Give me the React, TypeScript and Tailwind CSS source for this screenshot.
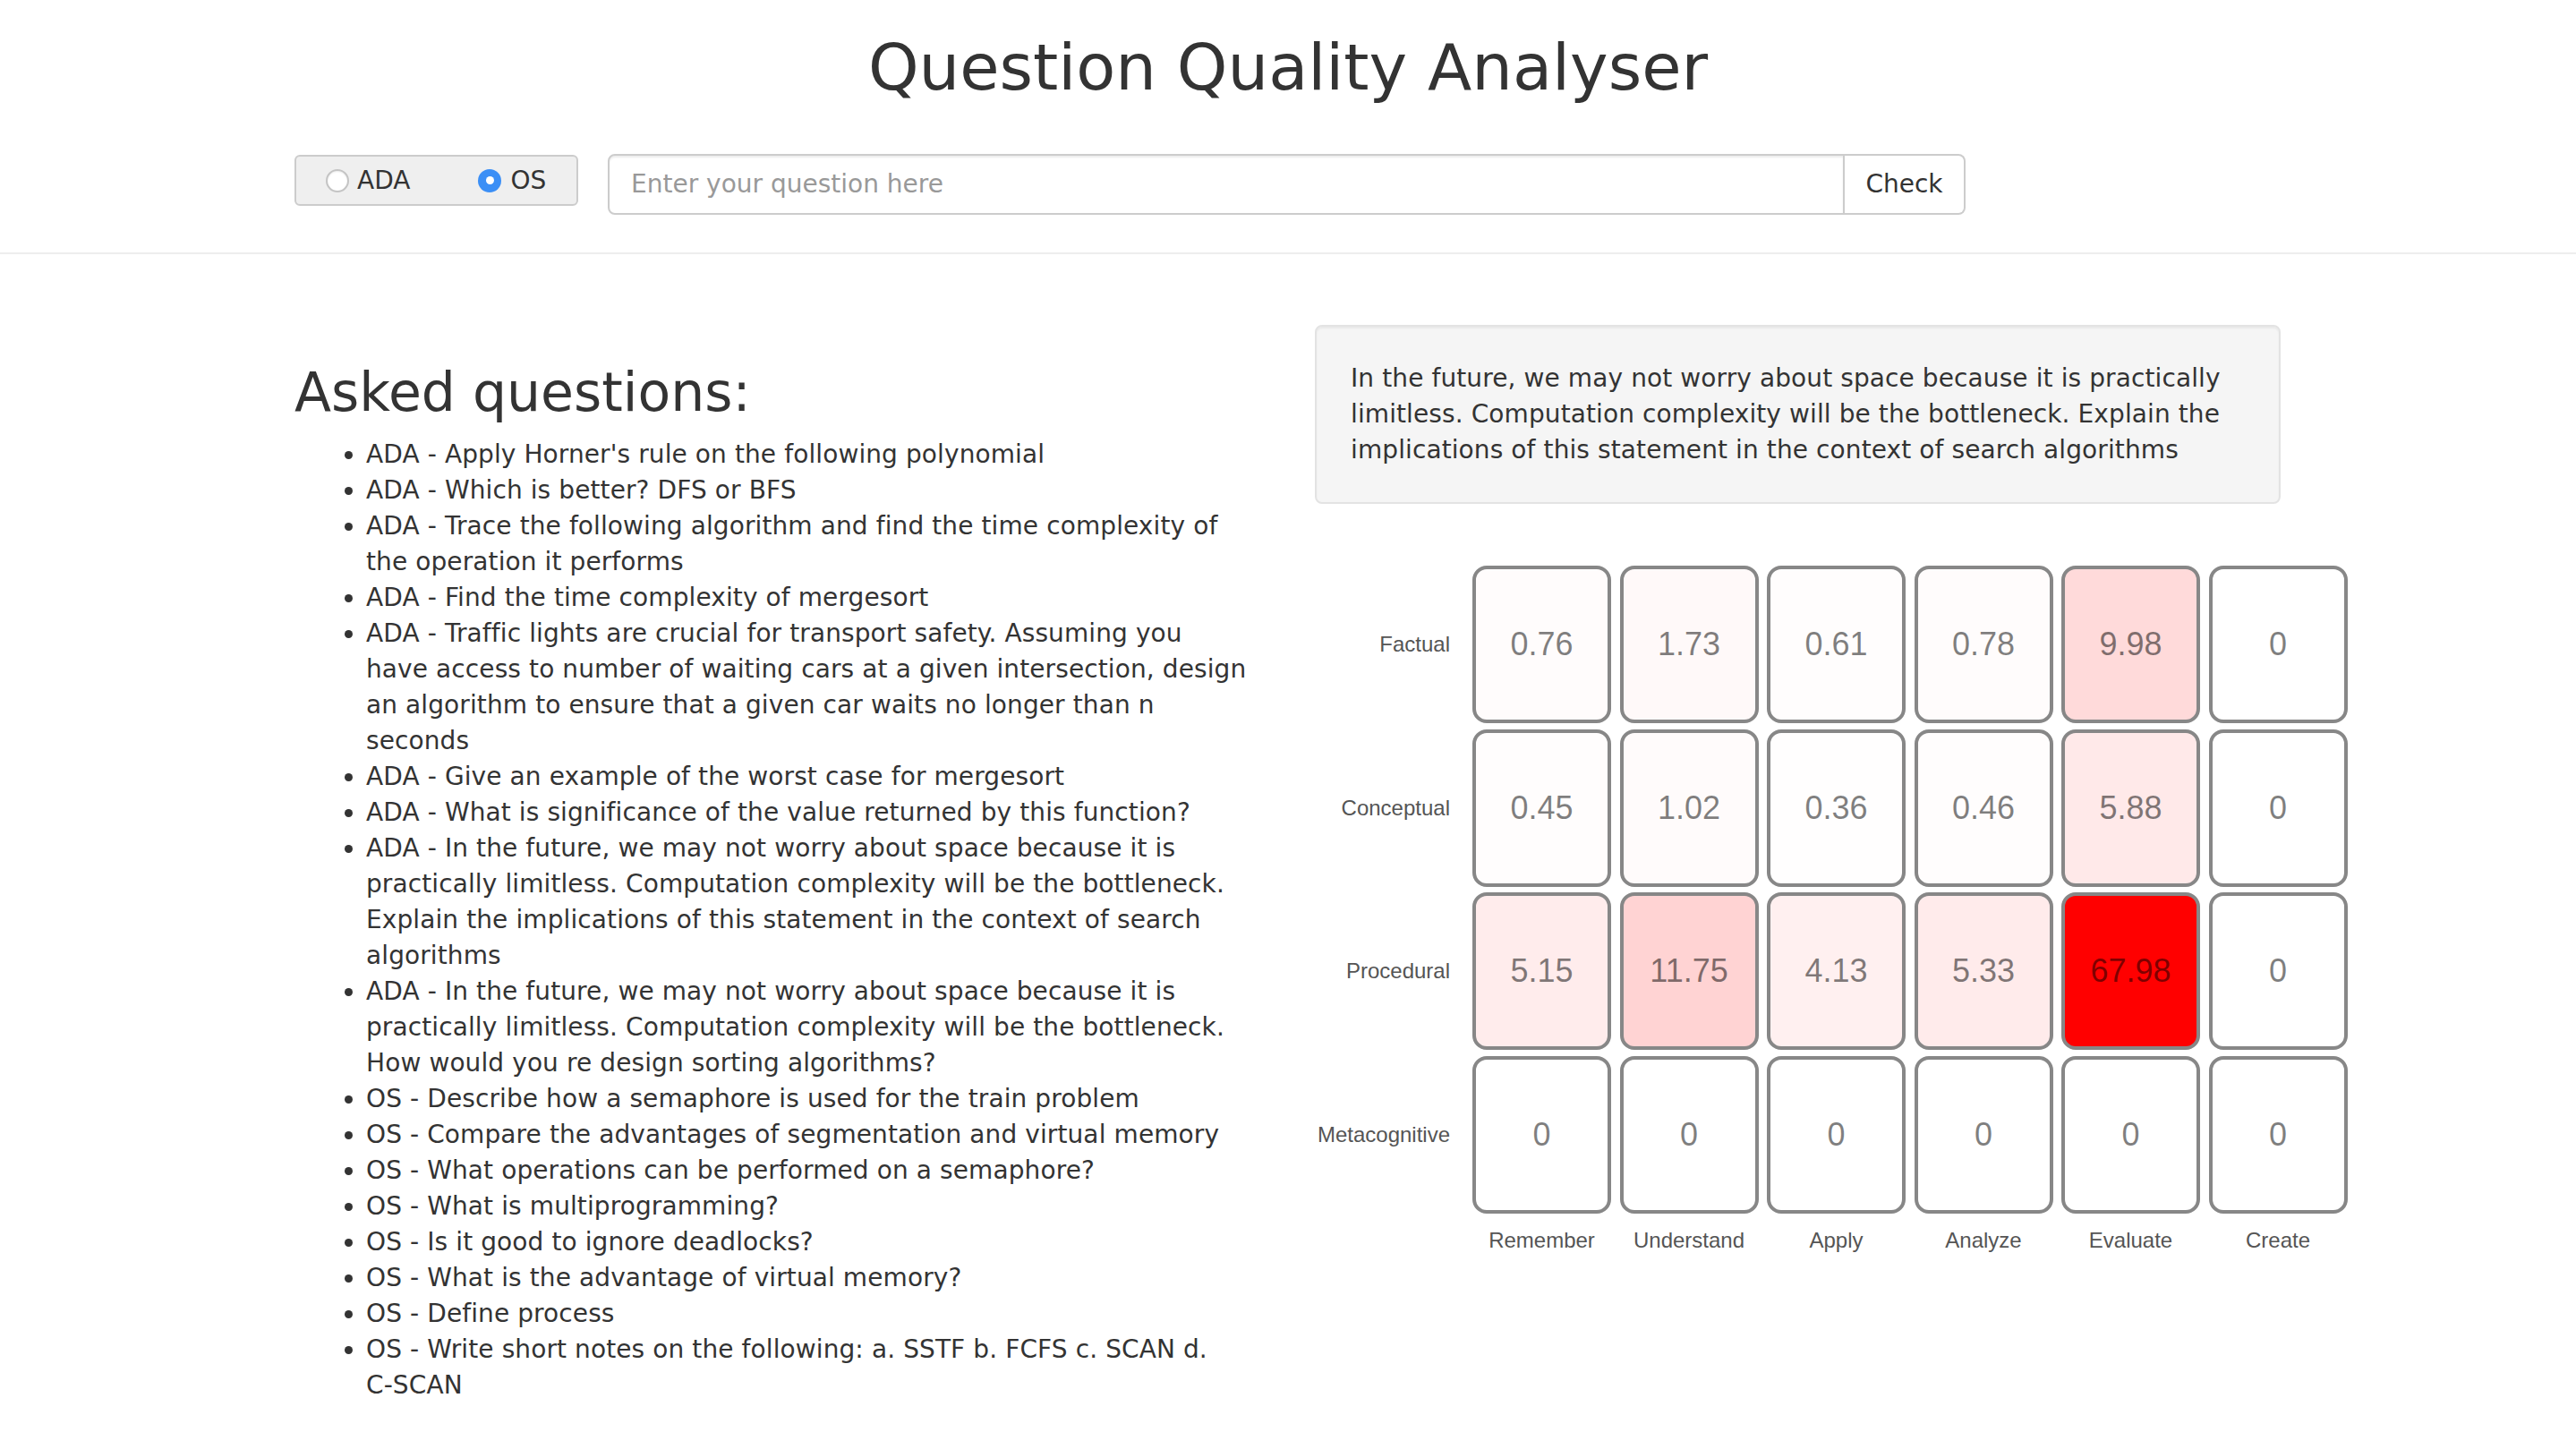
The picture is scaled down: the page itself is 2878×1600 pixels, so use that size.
import React from "react";

const questions: React.ReactNode[] = [
  "ADA - Apply Horner's rule on the following polynomial",
  "ADA - Which is better? DFS or BFS",
  "ADA - Trace the following algorithm and find the time complexity of the operation it performs",
  "ADA - Find the time complexity of mergesort",
  <>
    ADA - Traffic lights are crucial for transport safety. Assuming you
    <br />
    have access to number of waiting cars at a given intersection, design an algorithm to ensure that a given car
    waits no longer than n seconds
  </>,
  "ADA - Give an example of the worst case for mergesort",
  "ADA - What is significance of the value returned by this function?",
  "ADA - In the future, we may not worry about space because it is practically limitless. Computation complexity will be the bottleneck. Explain the implications of this statement in the context of search algorithms",
  "ADA - In the future, we may not worry about space because it is practically limitless. Computation complexity will be the bottleneck. How would you re design sorting algorithms?",
  "OS - Describe how a semaphore is used for the train problem",
  "OS - Compare the advantages of segmentation and virtual memory",
  "OS - What operations can be performed on a semaphore?",
  "OS - What is multiprogramming?",
  "OS - Is it good to ignore deadlocks?",
  "OS - What is the advantage of virtual memory?",
  "OS - Define process",
  <>
    OS - Write short notes on the following: a. SSTF b. FCFS c. SCAN d.{" "}
    <span className="whitespace-nowrap">C-SCAN</span>
  </>,
];

const rows = ["Factual", "Conceptual", "Procedural", "Metacognitive"];
const cols = ["Remember", "Understand", "Apply", "Analyze", "Evaluate", "Create"];
const values = [
  [0.76, 1.73, 0.61, 0.78, 9.98, 0],
  [0.45, 1.02, 0.36, 0.46, 5.88, 0],
  [5.15, 11.75, 4.13, 5.33, 67.98, 0],
  [0, 0, 0, 0, 0, 0],
];
const max = 67.98;

function cellColor(v: number) {
  const c = Math.round(255 * (1 - v / max));
  return `rgb(255, ${c}, ${c})`;
}

function Radio({ checked }: { checked?: boolean }) {
  if (checked) {
    return (
      <span className="w-[26px] h-[26px] rounded-full bg-[#3b8ff6] flex items-center justify-center">
        <span className="w-[9px] h-[9px] rounded-full bg-white" />
      </span>
    );
  }
  return (
    <span className="w-[26px] h-[26px] rounded-full bg-white border-2 border-[#c4c4c4] shadow-[inset_0_1px_2px_rgba(0,0,0,0.08)]" />
  );
}

function Heatmap() {
  return (
    <div className="mt-[69px] w-[1160px] font-['Liberation_Sans',Arial,sans-serif]">
      <div className="grid grid-cols-[166.5px_repeat(6,155px)] gap-x-[9.5px] gap-y-[6.5px]">
        {rows.map((r, i) => (
          <React.Fragment key={r}>
            <div className="h-[176px] flex items-center justify-end pr-[15.5px] text-[24px] text-[#555]">
              {r}
            </div>
            {values[i].map((v, j) => (
              <div
                key={j}
                className="h-[176px] rounded-[16px] border-4 border-[#878787] flex items-center justify-center text-[36px] text-black/50"
                style={{ backgroundColor: cellColor(v) }}
              >
                {v}
              </div>
            ))}
          </React.Fragment>
        ))}
        <div />
        {cols.map((c) => (
          <div key={c} className="mt-[10px] text-center text-[24px] leading-[28px] text-[#555]">
            {c}
          </div>
        ))}
      </div>
    </div>
  );
}

export default function App() {
  return (
    <div className="min-h-screen bg-white text-[#333] font-['DejaVu_Sans',Verdana,sans-serif]">
      {/* Header */}
      <h1 className="pt-[36px] text-center text-[72px] leading-[79px] font-normal">
        Question Quality Analyser
      </h1>

      <div className="mt-[57px] pl-[329px] flex items-start">
        <div className="w-[317px] h-[57px] mt-[1px] rounded-[6px] border-2 border-[#ccc] bg-[#efefef] flex items-center pl-[33px] text-[28px]">
          <Radio />
          <span className="ml-[9px]">ADA</span>
          <span className="ml-[76px] flex items-center">
            <Radio checked />
            <span className="ml-[10px]">OS</span>
          </span>
        </div>

        <div className="ml-[33px] flex h-[68px]">
          <div className="w-[1382px] h-full rounded-l-[8px] border-2 border-[#ccc] bg-white flex items-center pl-[24px] text-[28px] text-[#999] shadow-[inset_0_2px_2px_rgba(0,0,0,0.075)]">
            Enter your question here
          </div>
          <button className="w-[135px] h-full rounded-r-[8px] border-2 border-l-0 border-[#ccc] bg-white text-[28px] text-[#333]">
            Check
          </button>
        </div>
      </div>

      <div className="mt-[42px] h-[2px] bg-[#eee]" />

      {/* Main */}
      <div className="pl-[329px] pt-[79px] pb-[40px] grid grid-cols-[1076px_1079px] gap-x-[64px]">
        <div>
          <h2 className="mt-[42px] text-[60px] leading-[66px] font-normal">Asked questions:</h2>
          <ul className="mt-[17px] pl-[80px] list-disc text-[28px] leading-[40px] tracking-[0.1px]">
            {questions.map((q, i) => (
              <li key={i}>{q}</li>
            ))}
          </ul>
        </div>

        <div>
          <div className="h-[200px] rounded-[8px] border-2 border-[#e3e3e3] bg-[#f5f5f5] px-[38px] py-[38px] text-[28px] leading-[40px] tracking-[0.1px] shadow-[inset_0_2px_2px_rgba(0,0,0,0.05)]">
            In the future, we may not worry about space because it is practically limitless. Computation complexity
            will be the bottleneck. Explain the implications of this statement in the context of search algorithms
          </div>
          <Heatmap />
        </div>
      </div>
    </div>
  );
}
